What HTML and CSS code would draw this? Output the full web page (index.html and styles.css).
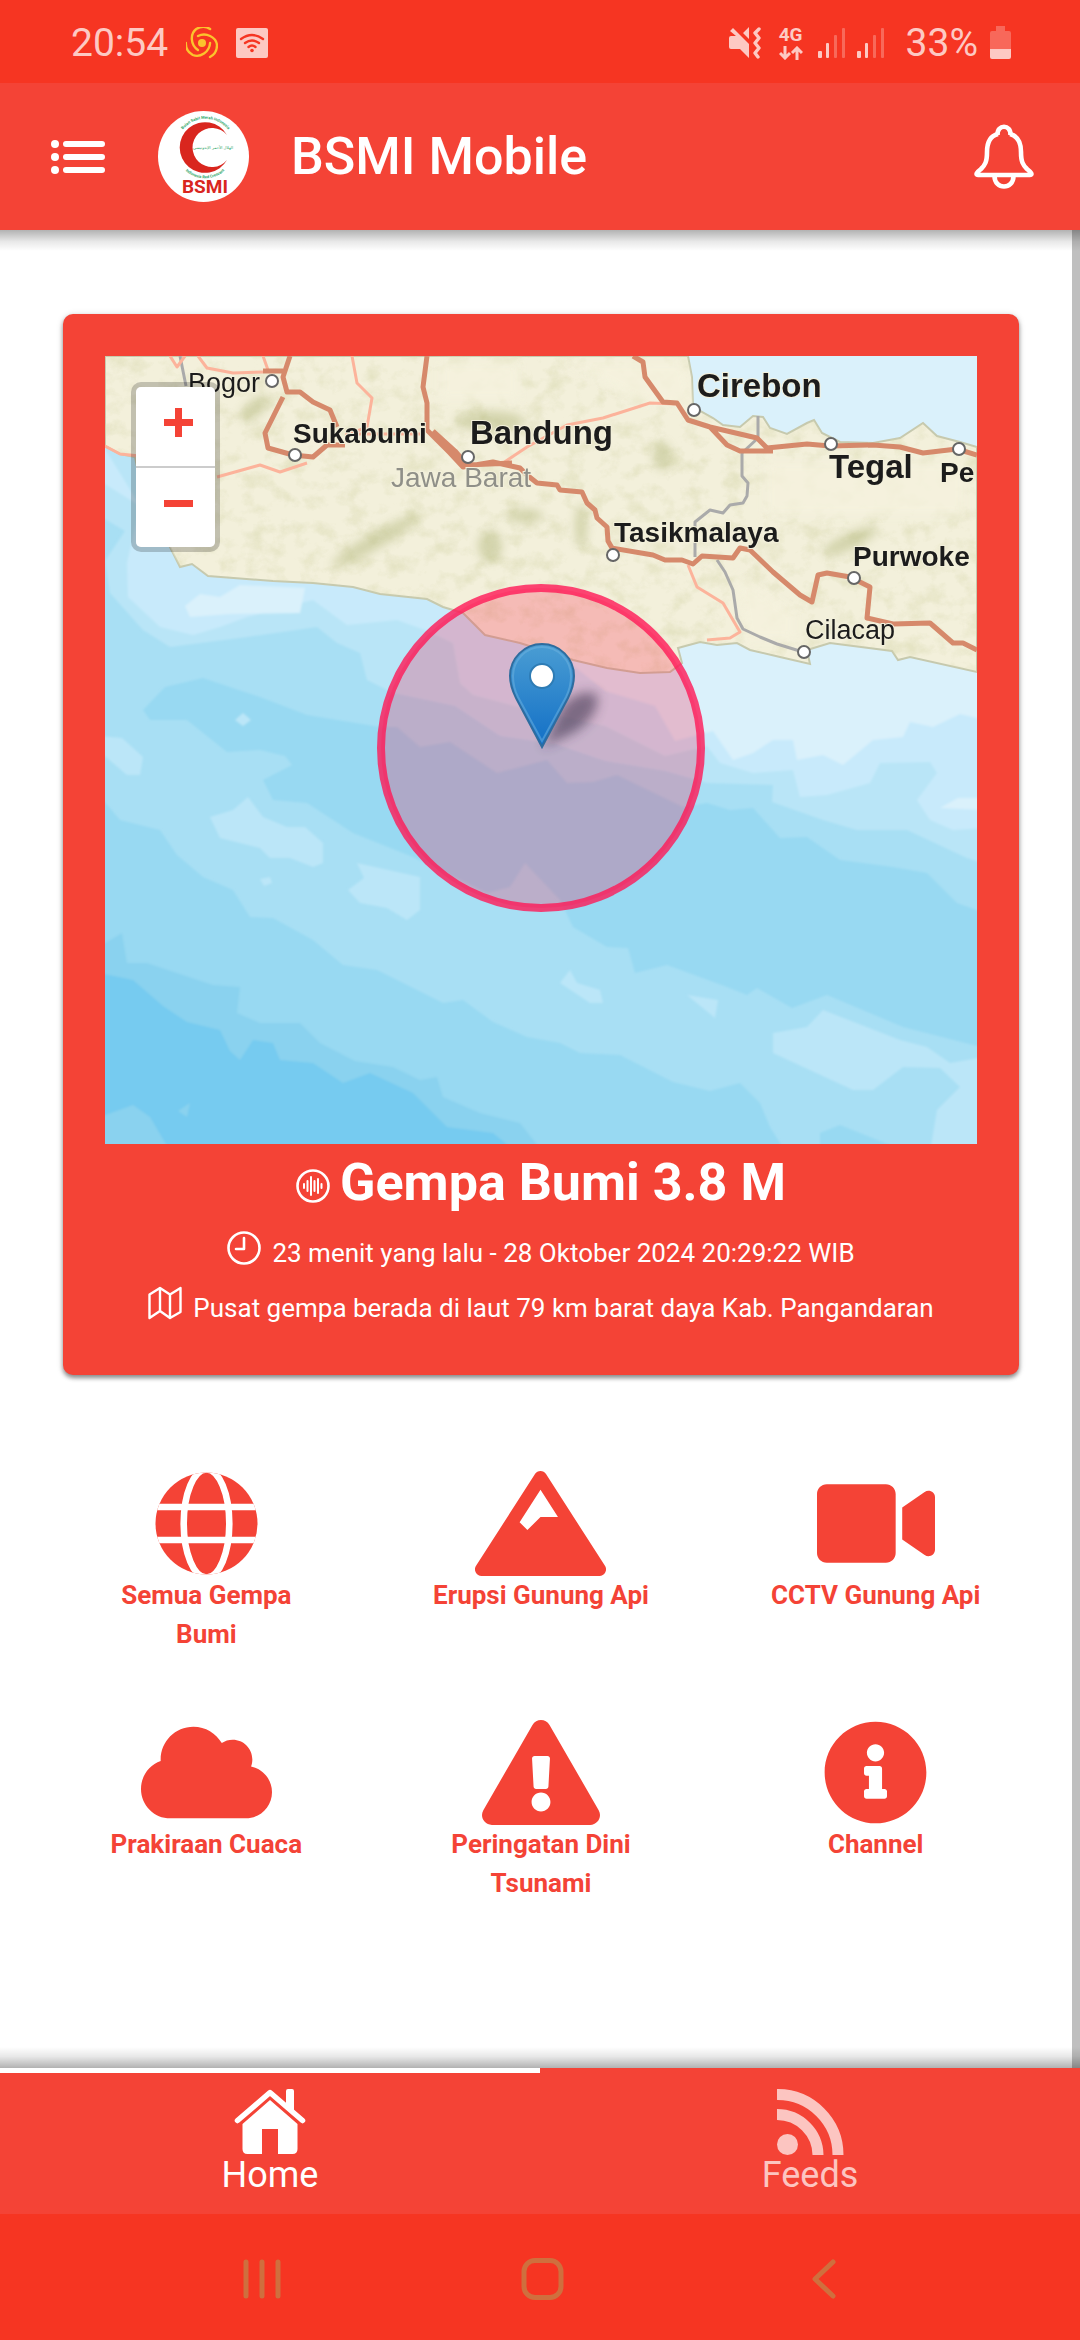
FILE: index.html
```html
<!DOCTYPE html>
<html lang="id">
<head>
<meta charset="utf-8">
<meta name="viewport" content="width=device-width, initial-scale=1">
<title>BSMI Mobile</title>
<link rel="stylesheet" href="styles.css">
</head>
<body>
<div class="status-bar">
  <div class="status-group status-left">
    <span class="clock">20:54</span>
    <svg width="32" height="32" viewBox="0 0 32 32" fill="none" stroke="#fbc42d" stroke-width="2.400" stroke-linecap="round">
      <circle cx="16" cy="16" r="4" fill="#fbc42d" stroke="none"/>
      <path d="M12 9c8-4 18 1 19 9 0 6-3 10-7 12"/>
      <path d="M12 9c8-4 18 1 19 9 0 6-3 10-7 12" transform="rotate(120 16 16)"/>
      <path d="M12 9c8-4 18 1 19 9 0 6-3 10-7 12" transform="rotate(240 16 16)"/>
    </svg>
    <svg width="32" height="30" viewBox="0 0 32 30">
      <rect width="32" height="30" rx="2" fill="#fdc9c3"/>
      <g fill="none" stroke="#f63522" stroke-width="2.400" stroke-linecap="round"><path d="M5 11q11-8 22 0M9 15q7-5 14 0M12.500 19q3.500-3 7 0"/></g>
      <circle cx="16" cy="22.500" r="1.800" fill="#f63522"/>
    </svg>
  </div>
  <div class="status-group">
    <svg width="32" height="32" viewBox="0 0 32 32" fill="#fdc9c3">
      <path d="M0 11q0-2 2-2h5L1 4l3-3 16 16v14l-9-9H2q-2 0-2-2zM14 6l6-6v12z"/>
      <path d="M30 2l-4 4 4 5-4 5 4 5-4 5 3 4" fill="none" stroke="#fdc9c3" stroke-width="3.400" stroke-linecap="round" stroke-linejoin="round"/>
    </svg>
    <span class="network">4G
      <svg width="24" height="14" viewBox="0 0 24 14" fill="none" stroke="#fdc9c3" stroke-width="3"><path d="M6 0v12M1 7l5 5 5-5M18 14V2M13 7l5-5 5 5"/></svg>
    </span>
    <svg class="signal" width="27" height="30" viewBox="0 0 27 30" fill="#fdc9c3"><rect y="23" width="4" height="7" rx="1"/><rect x="8" y="15" width="3" height="15" rx="1"/><g opacity=".35"><rect x="16" y="7" width="3" height="23" rx="1"/><rect x="24" width="3" height="30" rx="1"/></g></svg>
    <svg width="27" height="30" viewBox="0 0 27 30" fill="#fdc9c3"><rect y="23" width="4" height="7" rx="1"/><rect x="8" y="15" width="3" height="15" rx="1"/><g opacity=".35"><rect x="16" y="7" width="3" height="23" rx="1"/><rect x="24" width="3" height="30" rx="1"/></g></svg>
    <span class="battery-level">33%</span>
    <svg width="21" height="33" viewBox="0 0 21 33" fill="#fdc9c3"><path opacity=".35" d="M6 0h9v5h4q2 0 2 2v16H0V7q0-2 2-2h4z"/><path d="M0 23h21v8q0 2-2 2H2q-2 0-2-2z"/></svg>
  </div>
</div>

<header class="app-bar">
  <button class="icon-button" aria-label="Menu">
    <svg width="54" height="34" viewBox="0 0 54 34" fill="#fff"><circle cx="4" cy="4" r="4"/><circle cx="4" cy="17" r="4"/><circle cx="4" cy="30" r="4"/><path d="M15 4h36M15 17h36M15 30h36" stroke="#fff" stroke-width="6" stroke-linecap="round"/></svg>
  </button>
  <svg class="logo" width="91" height="91" viewBox="0 0 91 91" role="img" aria-label="BSMI">
    <circle cx="45.500" cy="45.500" r="45.500" fill="#fff"/>
    <path fill="#d9261e" d="M69 24A25.300 25.300 0 1 0 69 49A19.500 19.500 0 1 1 69 24z"/>
    <path id="arc-top" d="M21 25a29 29 0 0 1 53 0" fill="none"/>
    <path id="arc-bottom" d="M22 53a29 29 0 0 0 50 0" fill="none"/>
    <g fill="#2aa567" class="logo-small">
      <text text-anchor="middle"><textPath href="#arc-top" startOffset="50%">Bulan Sabit Merah Indonesia</textPath></text>
      <text text-anchor="middle"><textPath href="#arc-bottom" startOffset="50%">Indonesia Red Crescent</textPath></text>
      <text x="55" y="38" text-anchor="middle" class="logo-arabic">الهلال الأحمر الإندونيسي</text>
    </g>
    <text x="47" y="82" text-anchor="middle" class="logo-name">BSMI</text>
  </svg>
  <h1 class="app-title">BSMI Mobile</h1>
  <button class="icon-button bell" aria-label="Notifikasi">
    <svg width="60" height="65" viewBox="0 0 60 65" fill="none" stroke="#fff" stroke-width="4.600" stroke-linejoin="round"><path d="M24 10C16 12 13 18 13 28c0 10-2 13-6 17-4 3-6 6-3 6h52c3 0 1-3-3-6-4-4-6-7-6-17 0-10-3-16-11-18"/><path d="M23.500 11C23 0 37 0 36.500 11"/><path d="M20.500 52c0 14 19 14 19 0"/></svg>
  </button>
</header>

<main class="content">
  <section class="quake-card">
    <div class="map">
      <svg class="map-canvas" viewBox="0 0 872 788" role="img" aria-label="Peta lokasi gempa">
        <defs>
          <filter id="relief" x="0" y="0" width="100%" height="100%"><feTurbulence type="fractalNoise" baseFrequency=".05 .06" numOctaves="5" seed="8"/><feColorMatrix values="0 0 0 0 .68  0 0 0 0 .68  0 0 0 0 .42  2.400 0 0 0 -1.100"/></filter>
          <filter id="soft"><feGaussianBlur stdDeviation="5"/></filter>
          <filter id="shade" x="-40%" y="-40%" width="180%" height="180%"><feGaussianBlur stdDeviation="6"/></filter>
          <filter id="edge"><feGaussianBlur stdDeviation="1"/></filter>
          <linearGradient id="pin" x2="0" y2="1"><stop stop-color="#4a9dd3"/><stop offset="1" stop-color="#126fc6"/></linearGradient>
          <path id="land-shape" d="M0 0H583L587 21 588 51 608 62 618 69 635 71 648 60 658 61 665 72 682 78 702 67 709 64 717 77 735 86 768 87 795 82 818 67 832 80 855 86 872 91V316L805 301 793 304 787 295 725 287 702 294 705 308 675 301 645 294 632 287 612 289 595 286 573 292 577 307 565 316 535 317 502 312 468 304 415 287 380 279 358 257 338 251 322 243 275 238 248 231 208 227 168 225 103 220 87 208 75 211 65 191 40 150 30 101 15 98 0 90z"/>
          <clipPath id="land-clip"><use href="#land-shape"/></clipPath>
        </defs>
        <rect width="872" height="788" fill="#a8dff4"/>
        <g filter="url(#edge)">
          <path fill="#98d9f2" d="M38 354L60 331 98 322 155 341 202 359 275 371 292 371 315 391 345 386 392 417 442 404 462 427 488 426 512 419 578 451 602 447 625 454 648 452 675 482 702 481 735 504 788 511 822 517 852 547 880 557V692L798 671 722 639 687 652 652 632 642 639 622 631 562 609 530 617 523 592 502 591 468 571 455 544 420 507 405 531 382 537 308 501 248 477 202 447 168 444 158 424 187 409 180 400 155 394 122 396 82 364 45 364z"/>
          <path fill="#98d9f2" d="M-5 440L15 464 55 474 72 499 98 521 128 534 145 561 168 562 208 584 238 609 272 614 338 647 358 644 388 666 422 681 455 687 475 697 515 699 568 726 605 735 635 727 655 747 665 771 680 795H-5zM715 777l20-8 60 24h-80z"/>
          <path fill="#8ad2ef" d="M-5 590L17 577 22 607 42 607 108 629 135 631 132 657 155 667 195 667 215 687 250 705 288 711 315 724 332 721 338 741 375 757 415 767 437 795H-5z"/>
          <path fill="#76cbf0" d="M-5 617L28 624 58 650 82 666 115 674 125 695 135 704 148 684 168 687 175 704 208 707 238 727 265 717 308 737 342 771 388 777 410 795H-5z"/>
          <path fill="#8ad2ef" d="M-5 761L28 749 45 761 65 795H-5zM73 755l12-8-3 14z"/>
          <path fill="#b9e5f7" d="M-5 80V160L20 175 0 205 5 237 38 274 65 291 142 281 212 271 232 287 255 297 262 324 288 337 350 350 395 380 450 388 500 405 560 415 602 427 668 429 667 446 718 464 752 474 802 474 862 502 880 508V290L560 280 340 240z"/>
          <path fill="#c8eafb" d="M-5 85V125L35 150 22 207 23 241 55 271 88 279 115 271 142 261 208 244 242 269 292 264 320 274 348 287 355 327 368 339 410 350 500 370 560 400 602 390 615 407 648 417 688 414 695 441 722 439 765 427 775 407 825 406 832 417 812 444 825 464 848 474 880 472V290L560 280 340 240 60 190z"/>
          <path fill="#daf1fb" d="M450 295L500 335 550 350 570 385 608 375 628 404 648 397 668 384 688 384 692 404 718 399 738 409 768 384 798 381 805 366 828 371 855 358 880 364V290L560 280zM80 250l15-12 20 3 20-12 65 3-5 25-70 1-40 3zM835 452l18-10h27v12z"/>
          <path fill="#bbe6f8" d="M105 461l23-7 15-13 15 20 24 10h18l18 16v20l-10 4-23-9h-20l-10-10-40-10zM252 507l63 14v33l-13 10-20-12-27-5-12-13 16-12zM-5 380l22 2 21 19-3 18H22L-5 396zM155 523l10-2 2 6-8 3zM668 677l34-6 16-17 77 30 27 7 23 16 35-6v95h-55l7-42 23-23-20-19-37-1-30 23h-20l-80-37zM455 627l10-13 7 13 23 7 3 13h-13zM582 639l31 5-3 18zM130 364l8-7 8 7-8 6z"/>
        </g>
        <path fill="#daf1fb" d="M575 0H872V110H575z"/>
        <use href="#land-shape" fill="#f3f0db" stroke="#c6c9ae" stroke-width="2"/>
        <g clip-path="url(#land-clip)">
          <rect width="872" height="330" filter="url(#relief)" opacity=".5"/>
          <g fill="#a5ab67" opacity=".4" filter="url(#soft)"><ellipse cx="150" cy="52" rx="18" ry="8" transform="rotate(-40 150 52)"/><ellipse cx="557" cy="100" rx="9" ry="14"/><ellipse cx="476" cy="170" rx="6" ry="22"/><ellipse cx="745" cy="185" rx="30" ry="8" transform="rotate(-25 745 185)"/><ellipse cx="385" cy="190" rx="12" ry="16"/><ellipse cx="420" cy="160" rx="18" ry="7"/><ellipse cx="385" cy="65" rx="35" ry="10"/><ellipse cx="270" cy="185" rx="50" ry="8" transform="rotate(-30 270 185)"/></g>
          <g fill="#f5f2de" opacity=".8" filter="url(#soft)"><path d="M660 105h200v55H660zM630 215l60 40v30h-50zM460 5h120l10 50-60-10zM0 110l70 70v30zM335 5h80v40h-80z"/></g>
        </g>
        <g fill="none" stroke="#aaa" stroke-width="3" stroke-linejoin="round"><path d="M653 60V82L637 97V120L643 127 642 140 638 147 625 149 618 157 605 154 590 166V201M612 204L620 216 628 234 632 262 638 273 655 281 672 288 698 296M75 0l6 30"/></g>
        <g fill="none" stroke="#fcb39b" stroke-width="3" stroke-linejoin="round"><path d="M0 90l15 8 20 2M65 0l7 11 8-11M93 0l9 12 26 5 30-1M158 0l5 14M247 0l5 27 15 15-5 29-20 8M112 121l43-12 20 7 27-9M240 78h80M398 107l24-16 40-22 36-7 47-15 27 1M583 209l9 22 26 16 17 29-10 6-23 2"/></g>
        <g fill="none" stroke="#d6896b" stroke-width="5" stroke-linejoin="round"><path d="M185 0L178 21 182 36 195 36 208 46 225 54 232 71M178 41L160 77 163 92 188 99 208 101 222 89 240 89M158 15h20M322 0L318 31 322 47V74L345 97 358 111 388 106 415 112 422 119 432 127 452 129 455 134 477 136 482 147 490 154 492 162 502 171 503 185 507 192 548 199 560 204 577 204 588 208 597 200 628 202 635 192 645 194 668 216 695 239 707 246 713 219 722 217 745 221 765 231 762 262 788 268 825 267 848 287 858 287 872 294M328 75l22 20 12 14 45-2M528 0L538 6 540 21 558 46 572 47 583 64 605 71 652 82 662 92 702 88 725 90 768 89 795 91 818 97 852 93 872 99M605 71L622 89 635 95H668"/></g>
        <g fill="#fff" stroke="#666" stroke-width="2"><circle cx="167" cy="25" r="6"/><circle cx="190" cy="99" r="6"/><circle cx="363" cy="101" r="6"/><circle cx="589" cy="54" r="6"/><circle cx="726" cy="88" r="6"/><circle cx="854" cy="93" r="6"/><circle cx="508" cy="199" r="6"/><circle cx="749" cy="222" r="6"/><circle cx="699" cy="296" r="6"/></g>
        <g class="map-labels">
          <text class="town" x="83" y="36">Bogor</text>
          <text class="city" x="188" y="87">Sukabumi</text>
          <text class="metro" x="365" y="88">Bandung</text>
          <text class="region" x="286" y="131">Jawa Barat</text>
          <text class="metro" x="592" y="41">Cirebon</text>
          <text class="metro" x="724" y="122">Tegal</text>
          <text class="city" x="835" y="126">Pe</text>
          <text class="city" x="509" y="186">Tasikmalaya</text>
          <text class="city" x="748" y="210">Purwoke</text>
          <text class="town" x="700" y="283">Cilacap</text>
        </g>
        <circle cx="436" cy="392" r="160" fill="#f03" fill-opacity=".22" stroke="#ff1856" stroke-opacity=".8" stroke-width="8"/>
        <path d="M438 391L456 352q16-20 36-14 4 20-22 38z" fill="#352c45" opacity=".55" filter="url(#shade)"/>
        <path d="M437 391L411 342C407 334 405 328 405 320a32 32 0 0 1 64 0c0 8-2 14-6 22z" fill="url(#pin)" stroke="#2e6c9e" stroke-width="2"/>
        <path d="M437 385L413 341C409 333 408 327 408 320a29 29 0 0 1 58 0c0 7-1 13-5 21z" fill="none" stroke="#6fb3e0" stroke-opacity=".5" stroke-width="2"/>
        <circle cx="437" cy="320" r="12" fill="#fff" stroke="#2e7cb5" stroke-width="2"/>
      </svg>
      <div class="zoom-control">
        <button aria-label="Perbesar"><svg width="29" height="29" viewBox="0 0 29 29"><path d="M0 14.500h29M14.500 0v29" stroke="#f44336" stroke-width="7"/></svg></button>
        <button aria-label="Perkecil"><svg width="29" height="29" viewBox="0 0 29 29"><path d="M0 14.500h29" stroke="#f44336" stroke-width="7"/></svg></button>
      </div>
    </div>
    <h2 class="quake-title">
      <svg width="34" height="34" viewBox="0 0 34 34" fill="none" stroke="#fff" stroke-width="2" stroke-linecap="round"><circle cx="17" cy="17" r="15.500" stroke-width="2.600"/><path d="M8 15v4M11.500 12v10M15 8v18M18.500 12v10M22 10v14M25.500 15v4"/></svg>
      Gempa Bumi 3.8 M
    </h2>
    <p class="quake-row">
      <svg width="34" height="34" viewBox="0 0 34 34" fill="none" stroke="#fff" stroke-width="2.600" stroke-linecap="round" stroke-linejoin="round"><circle cx="17" cy="17" r="15.500"/><path d="M17 7v11H9"/></svg>
      23 menit yang lalu - 28 Oktober 2024 20:29:22 WIB
    </p>
    <p class="quake-row">
      <svg width="34" height="34" viewBox="0 0 34 34" fill="none" stroke="#fff" stroke-width="2.400" stroke-linejoin="round"><path d="M1.500 8.500L12 2l10 6.500L32.500 2v24L22 32 12 25 1.500 32zM12 2v23M22 8.500V32"/></svg>
      Pusat gempa berada di laut 79 km barat daya Kab. Pangandaran
    </p>
  </section>

  <nav class="menu-grid">
    <a class="menu-item" href="#gempa">
      <svg width="105" height="105" viewBox="0 0 105 105"><defs><clipPath id="globe"><circle cx="52.500" cy="52.500" r="51"/></clipPath></defs><g clip-path="url(#globe)"><rect width="105" height="105" fill="#f44336"/><g fill="none" stroke="#fff" stroke-width="6.600"><ellipse cx="52.500" cy="52.500" rx="22.800" ry="54"/><path d="M0 36h105M0 69h105"/></g></g></svg>
      <span>Semua Gempa Bumi</span>
    </a>
    <a class="menu-item" href="#erupsi">
      <svg width="131" height="105" viewBox="0 0 640 512"><path d="M634.920 462.700l-288-448C341.030 5.540 330.890 0 320 0s-21.030 5.540-26.920 14.700l-288 448a32 32 0 0 0-1.170 32.640A32 32 0 0 0 32 512h576c11.710 0 22.480-6.420 28.090-16.670a32 32 0 0 0-1.170-32.630zM320 91.180L405.390 224H320l-64 64-38.060-38.060z"/></svg>
      <span>Erupsi Gunung Api</span>
    </a>
    <a class="menu-item" href="#cctv">
      <svg width="118" height="105" viewBox="0 0 576 512"><path d="M336.200 64H47.800C21.400 64 0 85.400 0 111.800v288.400C0 426.600 21.400 448 47.800 448h288.400c26.400 0 47.800-21.400 47.800-47.800V111.800c0-26.400-21.400-47.800-47.800-47.800zm189.400 37.700L416 177.300v157.400l109.600 75.500c21.200 14.600 50.400-.3 50.400-25.800V127.500c0-25.400-29.100-40.400-50.400-25.800z"/></svg>
      <span>CCTV Gunung Api</span>
    </a>
    <a class="menu-item" href="#cuaca">
      <svg width="131" height="105" viewBox="0 0 640 512"><path d="M537.600 226.600c4.100-10.700 6.400-22.400 6.400-34.600 0-53-43-96-96-96-19.700 0-38.100 6-53.300 16.200C367 64.200 315.300 32 256 32c-88.400 0-160 71.600-160 160 0 2.700.1 5.400.2 8.100C40.200 219.800 0 273.200 0 336c0 79.500 64.500 144 144 144h368c70.700 0 128-57.300 128-128 0-61.900-44-113.600-102.400-125.400z"/></svg>
      <span>Prakiraan Cuaca</span>
    </a>
    <a class="menu-item" href="#tsunami">
      <svg width="118" height="105" viewBox="0 0 576 512"><path d="M569.517 440.013C587.975 472.007 564.806 512 527.940 512H48.054c-36.937 0-59.999-40.055-41.577-71.987L246.423 23.985c18.467-32.009 64.720-31.951 83.154 0l239.940 416.028zM288 354c-25.405 0-46 20.595-46 46s20.595 46 46 46 46-20.595 46-46-20.595-46-46-46zm-43.673-165.346l7.418 136c.347 6.364 5.609 11.346 11.982 11.346h48.546c6.373 0 11.635-4.982 11.982-11.346l7.418-136c.375-6.874-5.098-12.654-11.982-12.654h-63.383c-6.884 0-12.356 5.780-11.981 12.654z"/></svg>
      <span>Peringatan Dini Tsunami</span>
    </a>
    <a class="menu-item" href="#channel">
      <svg width="105" height="105" viewBox="0 0 512 512"><path d="M256 8C119.043 8 8 119.083 8 256c0 136.997 111.043 248 248 248s248-111.003 248-248C504 119.083 392.957 8 256 8zm0 110c23.196 0 42 18.804 42 42s-18.804 42-42 42-42-18.804-42-42 18.804-42 42-42zm56 254c0 6.627-5.373 12-12 12h-88c-6.627 0-12-5.373-12-12v-24c0-6.627 5.373-12 12-12h12v-64h-12c-6.627 0-12-5.373-12-12v-24c0-6.627 5.373-12 12-12h64c6.627 0 12 5.373 12 12v100h12c6.627 0 12 5.373 12 12v24z"/></svg>
      <span>Channel</span>
    </a>
  </nav>
  <div class="scroll-thumb"></div>
</main>

<nav class="tab-bar">
  <a class="tab tab-active" href="#home">
    <svg width="72" height="66" viewBox="0 0 72 66" fill="currentColor"><path d="M3.500 31.500L36 3.500l32.500 28" fill="none" stroke="currentColor" stroke-width="5.500" stroke-linecap="round" stroke-linejoin="round"/><path d="M52 2q0-2 2-2h4q2 0 2 2v20l-8-7zM36 11l27.500 24v25q0 5-5 5H44V40H28v25H13.500q-5 0-5-5V35z"/></svg>
    <span>Home</span>
  </a>
  <a class="tab" href="#feeds">
    <svg width="67" height="66" viewBox="0 0 67 66" fill="none" stroke="currentColor" stroke-width="11"><path d="M0 5.500A60.500 60.500 0 0 1 61 66M0 25.500A41 41 0 0 1 41 66"/><circle cx="10.500" cy="55.500" r="10.500" fill="currentColor" stroke="none"/></svg>
    <span>Feeds</span>
  </a>
</nav>

<div class="system-nav">
  <button aria-label="Aplikasi terbaru"><svg width="38" height="42" viewBox="0 0 38 42" fill="none" stroke="#cf6f3e" stroke-width="5" stroke-linecap="round"><path d="M3 4v34M19 4v34M35 4v34"/></svg></button>
  <button aria-label="Beranda"><svg width="43" height="42" viewBox="0 0 43 42" fill="none" stroke="#cf6f3e" stroke-width="5"><rect x="3" y="2.500" width="37" height="37" rx="11"/></svg></button>
  <button aria-label="Kembali"><svg width="26" height="42" viewBox="0 0 26 42" fill="none" stroke="#cf6f3e" stroke-width="5" stroke-linecap="round" stroke-linejoin="round"><path d="M22 4L4 21l18 17"/></svg></button>
</div>
</body>
</html>
```

FILE: styles.css
```css
* {
  box-sizing: border-box;
}

body {
  margin: 0;
  min-height: 100vh;
  display: flex;
  flex-direction: column;
  background: #fff;
  font-family: Roboto, "Liberation Sans", sans-serif;
  color: #fff;
}

svg {
  display: block;
  flex: none;
}

button {
  margin: 0;
  padding: 0;
  border: 0;
  background: none;
  color: inherit;
  font: inherit;
}

a {
  color: inherit;
  text-decoration: none;
}

/* phone status bar */
.status-bar {
  display: flex;
  align-items: center;
  justify-content: space-between;
  height: 83px;
  padding: 2px 69px 0 71px;
  background: #f63522;
  color: #fdc9c3;
  font-size: 39px;
  line-height: 46px;
}

.status-group {
  display: flex;
  align-items: center;
  gap: 12px;
}

.status-left {
  gap: 18px;
}

.network {
  display: flex;
  flex-direction: column;
  align-items: center;
  gap: 2px;
  margin: 0 3px 0 6px;
  font-size: 19px;
  line-height: 18px;
  font-weight: 700;
}

.battery-level {
  margin-left: 10px;
}

/* app bar */
.app-bar {
  display: flex;
  align-items: center;
  height: 147px;
  padding: 0 46px 0 51px;
  background: #f44336;
}

.logo {
  margin-left: 53px;
}

.logo-small {
  font-size: 4px;
  font-weight: 700;
}

.logo-arabic {
  font-family: "DejaVu Sans", sans-serif;
  font-size: 4px;
  font-weight: 400;
}

.logo-name {
  fill: #d9261e;
  font-size: 19px;
  font-weight: 700;
}

.app-title {
  flex: 1;
  margin: 0 0 0 42px;
  font-size: 52px;
  line-height: 62px;
  font-weight: 500;
}

/* page content */
.content {
  position: relative;
  flex: 1;
  padding: 84px 61px 60px 63px;
}

.content::before,
.content::after {
  content: "";
  position: absolute;
  left: 0;
  right: 0;
  z-index: 1;
  height: 21px;
}

.content::before {
  top: 0;
  background: linear-gradient(rgba(0, 0, 0, .3), rgba(0, 0, 0, .09) 55%, transparent);
}

.content::after {
  bottom: 0;
  background: linear-gradient(transparent, rgba(0, 0, 0, .09) 45%, rgba(0, 0, 0, .3));
}

.scroll-thumb {
  position: absolute;
  top: 0;
  right: 0;
  bottom: 0;
  width: 8px;
  background: #bfbfbf;
}

.quake-card {
  padding: 42px 42px 39px;
  border-radius: 10px;
  background: #f44336;
  box-shadow: 0 3px 4px rgba(0, 0, 0, .4), 0 1px 7px rgba(0, 0, 0, .15);
}

.map {
  position: relative;
}

.map-canvas {
  width: 100%;
  height: auto;
}

.map-labels {
  font-family: "Liberation Sans", sans-serif;
  fill: #1c1c1c;
  stroke: #f3f0db;
  stroke-width: 2px;
  paint-order: stroke;
}

.town {
  font-size: 27px;
}

.city {
  font-size: 28px;
  font-weight: 700;
}

.metro {
  font-size: 33px;
  font-weight: 700;
}

.region {
  font-size: 28px;
  fill: #8f8f88;
}

.zoom-control {
  position: absolute;
  top: 26px;
  left: 26px;
  display: flex;
  flex-direction: column;
  gap: 2px;
  border: 5px solid rgba(0, 0, 0, .2);
  border-radius: 10px;
  background: #ccc;
  background-clip: padding-box;
}

.zoom-control button {
  display: grid;
  place-items: center;
  width: 79px;
  height: 79px;
  padding: 0 0 8px 5px;
  background: #fff;
}

.zoom-control button:first-child {
  border-radius: 5px 5px 0 0;
}

.zoom-control button:last-child {
  border-radius: 0 0 5px 5px;
}

.quake-title,
.quake-row {
  display: flex;
  align-items: center;
  justify-content: center;
  margin: 0;
}

.quake-title {
  gap: 10px;
  margin-bottom: 4px;
  font-size: 52px;
  line-height: 78px;
  font-weight: 700;
}

.quake-title svg {
  margin-top: 6px;
}

.quake-row {
  gap: 11px;
  font-size: 26px;
  line-height: 55px;
}

.quake-row svg {
  margin-bottom: 12px;
}

/* shortcuts */
.menu-grid {
  display: grid;
  grid-template-columns: repeat(3, 1fr);
  gap: 66px 48px;
  margin-top: 96px;
  color: #f44336;
}

.menu-item {
  display: flex;
  flex-direction: column;
  align-items: center;
  padding: 0 28px;
  font-size: 26px;
  line-height: 39px;
  font-weight: 700;
  text-align: center;
}

.menu-item svg {
  fill: currentColor;
}

/* bottom tabs */
.tab-bar {
  display: grid;
  grid-template-columns: repeat(2, 1fr);
  height: 146px;
  background: #f44336;
}

.tab {
  display: flex;
  flex-direction: column;
  align-items: center;
  gap: 1px;
  padding-top: 16px;
  border-top: 5px solid transparent;
  color: #fcc5c1;
  font-size: 36px;
  line-height: 38px;
}

.tab-active {
  border-top-color: #fff;
  color: #fff;
}

.system-nav {
  display: grid;
  grid-template-columns: repeat(3, 1fr);
  height: 126px;
  padding: 4px 116px 0 122px;
  background: #f63522;
}

.system-nav button {
  display: grid;
  place-items: center;
}
```
